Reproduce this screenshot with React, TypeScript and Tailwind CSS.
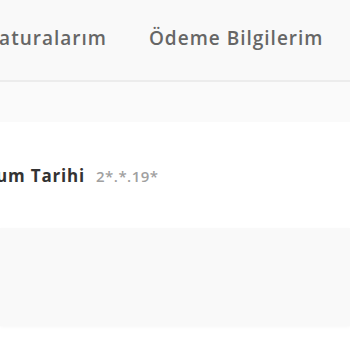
export default function App() {
  return (
    <div className="w-[350px] h-[350px] overflow-hidden bg-white font-['Open_Sans',_'Noto_Sans',_sans-serif]">
      <div className="h-[82px] bg-[#f9f9f9] border-b-2 border-[#ececec] overflow-hidden">
        <div className="flex items-center gap-[42px] ml-[-12px] pt-[25px] whitespace-nowrap text-[19px] font-semibold tracking-[1px] text-[#666666] leading-[26px]">
          <span>Faturalarım</span>
          <span>Ödeme Bilgilerim</span>
        </div>
      </div>
      <div className="h-[40px] bg-[#fafafa]" />
      <div className="h-[106px] bg-white overflow-hidden">
        <div className="flex items-baseline gap-[11px] ml-[-39px] pt-[41px] whitespace-nowrap">
          <span className="text-[17px] font-bold tracking-[0.8px] text-[#333333]">Doğum Tarihi</span>
          <span className="text-[15px] font-semibold tracking-[0.5px] text-[#a0a0a0]">2*.*.19*</span>
        </div>
      </div>
      <div className="h-[98px] bg-[#f9f9f9] shadow-[0_1px_3px_rgba(0,0,0,0.03)]" />
    </div>
  );
}
